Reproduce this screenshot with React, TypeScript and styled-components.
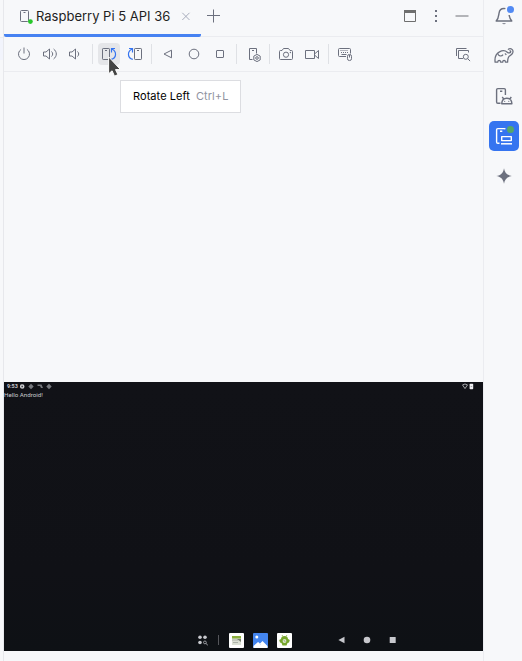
import React from "react";
import styled, { createGlobalStyle } from "styled-components";

const GlobalStyle = createGlobalStyle`
  * { box-sizing: border-box; }
  body { margin: 0; background: #f7f8fa; font-family: Inter, sans-serif; overflow: hidden; }
  svg { display: block; flex: none; }
`;

const Window = styled.div`
  display: flex;
  width: 522px;
  height: 661px;
  background: #f7f8fa;
  color: #1e1f22;
`;
const EditorEdge = styled.div`
  flex: none;
  width: 4px;
  border-right: 1px solid #e7e8ec;
  padding-top: 37px;
`;
const EdgeHighlight = styled.div`
  height: 23px;
  background: #f2f4fc;
  border-top: 1px solid #ebecf0;
`;
const Panel = styled.main`
  display: flex;
  flex-direction: column;
  width: 479px;
  position: relative;
`;
const TabBar = styled.header`
  display: flex;
  height: 37px;
  border-bottom: 1px solid #ebecf0;
`;
const Tab = styled.div`
  display: flex;
  align-items: center;
  width: 197px;
  height: 37px;
  padding: 0 8px 3px 13px;
  border-bottom: 3px solid #4682f2;
  border-radius: 0 0 2px 2px;
`;
const TabTitle = styled.span`
  width: 134px;
  margin-left: 3px;
  padding-top: 1px;
  font-size: 13px;
  line-height: 16px;
  white-space: nowrap;
`;
const TabClose = styled.span`
  margin-left: 8px;
`;
const NewTab = styled.span`
  padding: 8px 0 0 4px;
`;
const WindowActions = styled.div`
  display: flex;
  gap: 10px;
  margin-left: auto;
  padding: 8px 13px 0 0;
`;
const Toolbar = styled.div`
  display: flex;
  align-items: center;
  height: 35px;
  padding: 0 7px 1px 7px;
  border-bottom: 1px solid #ebecf0;
`;
const ToolButton = styled.span<{ $active?: boolean; $end?: boolean }>`
  display: grid;
  place-items: center;
  width: 22px;
  height: 22px;
  margin: 0 2px;
  margin-left: ${(p) => (p.$end ? "auto" : "2px")};
  border-radius: 4px;
  background: ${(p) => (p.$active ? "#e5e6e9" : "transparent")};
`;
const Divider = styled.span`
  width: 1px;
  height: 20px;
  margin: 0 3px;
  background: #dfe1e5;
`;
const Stage = styled.section`
  display: flex;
  flex-direction: column;
  justify-content: flex-end;
  flex: 1;
  padding-bottom: 10px;
`;
const Device = styled.div`
  display: flex;
  flex-direction: column;
  height: 269px;
  background: linear-gradient(#111217 0%, #101116 70%, #0e1115 100%);
  color: #c9cacf;
  font-family: Roboto, sans-serif;
`;
const StatusBar = styled.div`
  display: flex;
  align-items: center;
  height: 9px;
  padding: 0 9px 0 3px;
`;
const Clock = styled.span`
  width: 13px;
  font-size: 5.4px;
  font-weight: 700;
  line-height: 9px;
`;
const StatusSymbols = styled.span`
  margin-left: auto;
`;
const AppText = styled.div`
  height: 9px;
  font-size: 6.2px;
  line-height: 8px;
  white-space: nowrap;
`;
const Taskbar = styled.div`
  display: flex;
  align-items: center;
  height: 22px;
  margin-top: auto;
  padding-left: 193px;
`;
const Dock = styled.div`
  display: flex;
  align-items: center;
  gap: 9px;
`;
const DockLine = styled.span`
  width: 1px;
  height: 10px;
  margin: 0 10px 0 9px;
  background: #55565b;
`;
const NavKeys = styled.div`
  margin-left: 45px;
`;
const Rail = styled.aside`
  display: flex;
  flex-direction: column;
  align-items: center;
  gap: 10px;
  width: 39px;
  padding: 1px 2px 0 4px;
  border-left: 1px solid #ebecf0;
`;
const RailButton = styled.span<{ $selected?: boolean }>`
  display: grid;
  place-items: center;
  flex: none;
  width: 30px;
  height: 30px;
  border-radius: 5px;
  background: ${(p) => (p.$selected ? "#3574f0" : "transparent")};
`;
const Tooltip = styled.div`
  position: absolute;
  left: 116px;
  top: 80px;
  display: flex;
  align-items: center;
  gap: 6px;
  width: 121px;
  height: 33px;
  padding: 0 0 1px 12px;
  border: 1px solid #dcdde1;
  background: #fff;
  color: #000;
  font-size: 11px;
  letter-spacing: 0.06px;
  line-height: 14px;
  white-space: nowrap;
`;
const Shortcut = styled.span`
  color: #9194a1;
`;
const Pointer = styled.svg`
  position: absolute;
  left: 104px;
  top: 56px;
`;

const INK = "#6c707e";

type IconProps = { size?: number; color?: string; children: React.ReactNode };
const Icon = ({ size = 16, color = INK, children }: IconProps) => (
  <svg width={size} height={size} viewBox={`0 0 ${size} ${size}`} fill="none" stroke={color} strokeLinejoin="round">
    {children}
  </svg>
);

const RotateLeft = () => (
  <Icon>
    <rect x="1.5" y="2.5" width="7" height="11" rx=".7" />
    <path d="M4 4.5h2" />
    <path d="M10.2 13.4C15.8 12 15.8 5.4 11.2 3.2M10.5 6.5v-4H14" stroke="#3574f0" strokeWidth="1.2" strokeLinejoin="miter" />
  </Icon>
);
const RotateRight = () => (
  <Icon>
    <rect x="7.5" y="2.5" width="7" height="11" rx=".7" />
    <path d="M10 4.5h2" />
    <path d="M5.8 13.4C.2 12 .2 5.4 4.8 3.2M5.5 6.5v-4H2" stroke="#3574f0" strokeWidth="1.2" strokeLinejoin="miter" />
  </Icon>
);

const App = () => (
  <Window>
    <GlobalStyle />
    <EditorEdge><EdgeHighlight /></EditorEdge>
    <Panel>
      <TabBar>
        <Tab>
          <Icon>
            <rect x="3.5" y="2.5" width="8" height="11" rx="1" />
            <path d="M6.5 4.5h2" />
            <circle cx="13.4" cy="13.6" r="2.4" fill="#27c72b" stroke="none" />
          </Icon>
          <TabTitle>Raspberry Pi 5 API 36</TabTitle>
          <TabClose><Icon color="#a8adbd"><path d="m4.3 4.8 7.2 7.2m0-7.2-7.2 7.2" /></Icon></TabClose>
        </Tab>
        <NewTab><Icon><path d="M8.5 1.5v13M2 7.5h13" /></Icon></NewTab>
        <WindowActions>
          <Icon color="#6e6e6e">
            <path d="M2.5 2.5h11v11h-11z" strokeLinejoin="miter" />
            <path d="M2 2h12v3H2z" fill="#6e6e6e" stroke="none" />
          </Icon>
          <Icon>
            <path d="M7 2h2v2H7zM7 7h2v2H7zM7 12h2v2H7z" fill={INK} stroke="none" />
          </Icon>
          <Icon><path d="M1.5 8h13" stroke="#b3b4b8" strokeWidth="2" /></Icon>
        </WindowActions>
      </TabBar>
      <Toolbar>
        <ToolButton><Icon><path d="M8 1.5v6M5.1 3.4a5.5 5.5 0 1 0 5.8 0" /></Icon></ToolButton>
        <ToolButton>
          <Icon>
            <path d="M1.5 6v4H4l3.5 3V3L4 6zM9.5 5.5c1.6 1.4 1.6 3.6 0 5M11.6 3c3.6 2.7 3.6 7.3 0 10" />
          </Icon>
        </ToolButton>
        <ToolButton><Icon><path d="M1.5 6v4H4l3.5 3V3L4 6zM9.5 5.5c1.6 1.4 1.6 3.6 0 5" /></Icon></ToolButton>
        <Divider />
        <ToolButton $active><RotateLeft /></ToolButton>
        <ToolButton><RotateRight /></ToolButton>
        <Divider />
        <ToolButton><Icon><path d="M11.5 4.2v7.6L4 8z" /></Icon></ToolButton>
        <ToolButton><Icon><circle cx="8" cy="8" r="4.8" /></Icon></ToolButton>
        <ToolButton><Icon><rect x="4.5" y="4.5" width="7" height="7" rx=".4" /></Icon></ToolButton>
        <Divider />
        <ToolButton>
          <Icon>
            <path d="M7.5 13.5h-3v-11h7v5M7 4.5h2" />
            <path d="m12 8.4 3.2 1.7v3.8L12 15.6l-3.2-1.7v-3.8z" />
            <circle cx="12" cy="12" r="1.3" />
          </Icon>
        </ToolButton>
        <Divider />
        <ToolButton>
          <Icon>
            <path d="M2.5 4.5H4l1.5-2h5l1.5 2h1.5q1 0 1 1v7q0 1-1 1h-11q-1 0-1-1v-7q0-1 1-1z" />
            <circle cx="8" cy="8.7" r="2.6" />
            <circle cx="12.4" cy="6.5" r=".7" fill={INK} stroke="none" />
          </Icon>
        </ToolButton>
        <ToolButton>
          <Icon><path d="M1.5 4.5h9v8h-9zM10.5 8l4-3.5v8l-4-3.5" /></Icon>
        </ToolButton>
        <Divider />
        <ToolButton>
          <Icon>
            <path d="M9 10.5H2.5q-1 0-1-1v-6q0-1 1-1h10q1 0 1 1v4" />
            <path d="M3.5 4.5h8M4 6.5h8" strokeDasharray="1 1" />
            <path d="M4.5 8.5h5" />
            <rect x="10.5" y="8.5" width="4" height="6" rx="1.8" />
            <path d="M12.5 9v2.5" />
          </Icon>
        </ToolButton>
        <ToolButton $end>
          <Icon>
            <path d="M1.5 10V2.5h10M8 12.5H3.5v-8h10v2" />
            <circle cx="10.8" cy="10.8" r="2.5" />
            <path d="m12.6 12.6 2.5 2.5" />
          </Icon>
        </ToolButton>
      </Toolbar>
      <Stage>
        <Device>
          <StatusBar>
            <Clock>9:53</Clock>
            <svg width="34" height="7" viewBox="0 0 34 7" fill="#77797e">
              <circle cx="2.2" cy="3.5" r="2.3" fill="#d0d1d4" />
              <path d="M1.4 2.7h1.6v1.6H1.4z" fill="#44464a" />
              <path d="m11 .8 2.7 2.7L11 6.2 8.3 3.5zM17.5 1.5h4L23 5h-2l-1-2h-2.5zM29 .8l2.7 2.7L29 6.2l-2.7-2.7z" />
            </svg>
            <StatusSymbols>
              <svg width="12" height="7" viewBox="0 0 12 7" fill="none">
                <path d="M.5 1.9q2.5-1.8 5 0L3 5.6z" stroke="#b2b3b7" strokeWidth=".9" />
                <rect x="7.6" y=".8" width="3.6" height="5.4" rx=".7" fill="#eeeef1" />
                <path d="M8.7 3.5h1.5" stroke="#75767c" strokeWidth=".6" />
              </svg>
            </StatusSymbols>
          </StatusBar>
          <AppText>Hello Android!</AppText>
          <Taskbar>
            <svg width="12" height="12" viewBox="0 0 12 12" fill="#c8c9ce">
              <circle cx="3" cy="3.2" r="1.8" /><circle cx="8" cy="3.2" r="1.8" /><circle cx="3" cy="8.5" r="1.8" />
              <circle cx="7.9" cy="8.4" r="1.4" fill="none" stroke="#c8c9ce" strokeWidth=".7" />
              <path d="m9 9.5 1.8 1.7" stroke="#c8c9ce" strokeWidth=".8" />
            </svg>
            <DockLine />
            <Dock>
              <svg width="15" height="15" viewBox="0 0 15 15">
                <rect width="15" height="15" rx="1" fill="#fff" />
                <path d="M3 3h9v9H3z" fill="#dce1d5" />
                <path d="M3 3h9v2.5H3z" fill="#8bae3d" />
                <path d="M3 6.5h6v1H3zM4 9h5v1H4z" fill="#aeb2aa" />
                <path d="m8 6 4 3V6z" fill="#777f70" />
              </svg>
              <svg width="15" height="15" viewBox="0 0 15 15">
                <rect width="15" height="15" rx="1" fill="#4385ef" />
                <circle cx="3.8" cy="4" r="1.5" fill="#fff" />
                <path d="M.5 15v-2L5 9l2 1.5L9.5 8l5 5v2z" fill="#fff" />
                <path d="m5 9 3 3" stroke="#c9dcff" strokeWidth=".7" />
              </svg>
              <svg width="15" height="15" viewBox="0 0 15 15">
                <rect width="15" height="15" rx="1" fill="#fff" />
                <path d="M4 6q.2-3 3.5-3T11 6l1.8 1-.8 2.5-1.5.5-1 2.5h-4l-1-2.5L3 9.5 2.2 7z" fill="#77a62d" />
                <path d="m5 2 1 1.5M10 2 9 3.5" stroke="#77a62d" strokeWidth=".7" />
                <circle cx="7.5" cy="8" r="1.9" fill="#dce6cb" />
                <path d="m6.8 7 1.5 2" fill="none" stroke="#829a64" strokeWidth=".7" />
              </svg>
            </Dock>
            <NavKeys>
              <svg width="64" height="10" viewBox="0 0 64 10" fill="#c7c8cd">
                <path d="M7.5 1.8v6.4L1.4 5z" /><circle cx="30" cy="5" r="3.3" /><rect x="52.7" y="2" width="6" height="6" rx=".3" />
              </svg>
            </NavKeys>
          </Taskbar>
        </Device>
      </Stage>
      <Tooltip><span>Rotate Left</span><Shortcut>Ctrl+L</Shortcut></Tooltip>
      <Pointer width="14" height="22" viewBox="0 0 14 22">
        <path d="M.6.8v17l3.5-3 2.4 5.4 3.4-1.6-2.4-5h5z" fill="#444" stroke="#fff" strokeWidth="1" />
      </Pointer>
    </Panel>
    <Rail>
      <RailButton>
        <Icon size={20}>
          <path d="M11.4 2.7A5 5 0 0 0 10 2.5c-2.9 0-4.6 1.8-5 4.8-.4 3-.5 5.2-2.8 7.7h15.6c-2-2.2-2.4-4-2.7-6" strokeWidth="1.4" />
          <path d="M8 17.2h4q-2 2.2-4 0z" fill={INK} stroke="none" />
          <circle cx="16.5" cy="3.5" r="3.5" fill="#528af3" stroke="none" />
        </Icon>
      </RailButton>
      <RailButton>
        <Icon size={20}>
          <path strokeWidth="1.3" d="M14 3.6c1-1 2.8-1.2 3.9-.4 1.5 1 1.4 3.4.1 4.8-.8 1-1.9 1.6-2.8 2.3-1.2 1-1.5 3.6-1.6 5.8h-2.2c0-2.3-2.6-2.3-2.7 0H6.5c0-2.3-2.5-2.3-2.8 0H1.1c-.5-4.2.6-8.2 4.4-10.2C8 4.5 11 4.2 13.3 6.2c1.5 1.3 3.5.6 3.4-.7 0-.7-.8-.8-1.2-.3" />
          <path strokeWidth="1.2" d="M3.7 7.4c.7 2.7 3.7 3.6 5.4 1.2M10.8 7.5c.8.3 1.2.8 1.4 1.5" />
        </Icon>
      </RailButton>
      <RailButton>
        <Icon size={20}>
          <path strokeWidth="1.4" d="M6.5 17.3H3.8q-1.2 0-1.2-1.2V3.8q0-1.2 1.2-1.2h6.4q1.2 0 1.2 1.2V9M6 5.3h2.3" />
          <path strokeWidth="1.4" d="M7.7 17.8c.2-3.4 2-5.6 5-5.6s5 2.2 5.2 5.6zM9.8 13l-1.6-2M15.8 13l1.5-2" />
          <circle cx="10.7" cy="15.3" r=".6" fill={INK} stroke="none" /><circle cx="14.8" cy="15.3" r=".6" fill={INK} stroke="none" />
        </Icon>
      </RailButton>
      <RailButton $selected>
        <Icon size={20} color="#fff">
          <path strokeWidth="1.4" d="M5.5 17.3H3.8q-1.2 0-1.2-1.2V3.8q0-1.2 1.2-1.2h6.4q.8 0 1 .7M6 5.3h2.3" />
          <rect x="7.7" y="10.6" width="9.6" height="4" strokeWidth="1.4" /><path strokeWidth="1.5" d="M7 17.8h11" />
          <circle cx="16.5" cy="3.5" r="3.5" fill="#55a76a" stroke="none" />
        </Icon>
      </RailButton>
      <RailButton>
        <Icon size={20}>
          <path d="M10 2.2c.7 4.2 2.8 7.1 7.8 7.8-5 .7-7.1 3.6-7.8 7.8-.7-4.2-2.8-7.1-7.8-7.8 5-.7 7.1-3.6 7.8-7.8z" fill={INK} stroke="none" />
        </Icon>
      </RailButton>
    </Rail>
  </Window>
);

export default App;
